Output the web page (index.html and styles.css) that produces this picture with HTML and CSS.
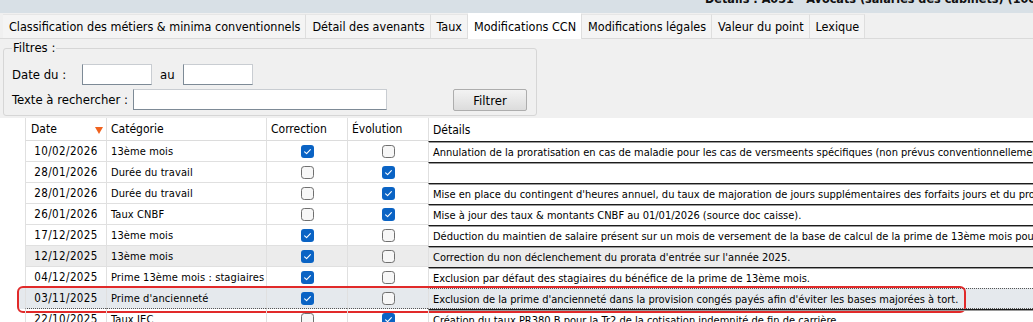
FILE: index.html
```html
<!DOCTYPE html>
<html lang="fr">
<head>
<meta charset="utf-8">
<title>Détails</title>
<link rel="stylesheet" href="styles.css">
</head>
<body>
<svg class="defs" width="0" height="0" aria-hidden="true">
  <symbol id="cb-on" viewBox="0 0 13 13">
    <rect x="0" y="0" width="13" height="13" rx="3" fill="#0a63c4"/>
    <path d="M3.6 6.9 L5.6 8.7 L9.4 4.6" fill="none" stroke="#fff" stroke-width="1.1" stroke-linecap="round" stroke-linejoin="round"/>
  </symbol>
  <symbol id="cb-off" viewBox="0 0 13 13">
    <rect x="0.5" y="0.5" width="12" height="12" rx="2.8" fill="#f7f7f7" stroke="#6f6f6f" stroke-width="1"/>
  </symbol>
</svg>

<div class="titlebar"><span class="title">Détails : A051 - Avocats (salariés des cabinets) (1000)</span></div>

<nav class="tabs">
  <span class="tab">Classification des métiers &amp; minima conventionnels</span>
  <span class="tab">Détail des avenants</span>
  <span class="tab">Taux</span>
  <span class="tab active">Modifications CCN</span>
  <span class="tab">Modifications légales</span>
  <span class="tab">Valeur du point</span>
  <span class="tab">Lexique</span>
</nav>

<fieldset class="filters">
  <legend>Filtres :</legend>
  <div class="frow">
    <label class="lbl-date">Date du :</label>
    <input class="inp date" type="text">
    <span class="au">au</span>
    <input class="inp date" type="text">
  </div>
  <div class="frow">
    <label class="lbl-text">Texte à rechercher :</label>
    <input class="inp text" type="text">
    <button class="btn" type="button">Filtrer</button>
  </div>
</fieldset>

<div class="grid">
  <div class="row head">
    <div class="c c0"></div>
    <div class="c c1">Date<span class="sort"></span></div>
    <div class="c c2">Catégorie</div>
    <div class="c c3">Correction</div>
    <div class="c c4">Évolution</div>
    <div class="c c5">Détails</div>
  </div>

  <div class="row">
    <div class="c c0"></div>
    <div class="c c1">10/02/2026</div>
    <div class="c c2">13ème mois</div>
    <div class="c c3"><svg class="cb"><use href="#cb-on"/></svg></div>
    <div class="c c4"><svg class="cb"><use href="#cb-off"/></svg></div>
    <div class="c c5">Annulation de la proratisation en cas de maladie pour les cas de versmeents spécifiques (non prévus conventionnellement)</div>
  </div>

  <div class="row">
    <div class="c c0"></div>
    <div class="c c1">28/01/2026</div>
    <div class="c c2">Durée du travail</div>
    <div class="c c3"><svg class="cb"><use href="#cb-off"/></svg></div>
    <div class="c c4"><svg class="cb"><use href="#cb-on"/></svg></div>
    <div class="c c5"></div>
  </div>

  <div class="row">
    <div class="c c0"></div>
    <div class="c c1">28/01/2026</div>
    <div class="c c2">Durée du travail</div>
    <div class="c c3"><svg class="cb"><use href="#cb-off"/></svg></div>
    <div class="c c4"><svg class="cb"><use href="#cb-on"/></svg></div>
    <div class="c c5">Mise en place du contingent d'heures annuel, du taux de majoration de jours supplémentaires des forfaits jours et du projet</div>
  </div>

  <div class="row">
    <div class="c c0"></div>
    <div class="c c1">26/01/2026</div>
    <div class="c c2">Taux CNBF</div>
    <div class="c c3"><svg class="cb"><use href="#cb-off"/></svg></div>
    <div class="c c4"><svg class="cb"><use href="#cb-on"/></svg></div>
    <div class="c c5">Mise à jour des taux &amp; montants CNBF au 01/01/2026 (source doc caisse).</div>
  </div>

  <div class="row">
    <div class="c c0"></div>
    <div class="c c1">17/12/2025</div>
    <div class="c c2">13ème mois</div>
    <div class="c c3"><svg class="cb"><use href="#cb-on"/></svg></div>
    <div class="c c4"><svg class="cb"><use href="#cb-off"/></svg></div>
    <div class="c c5">Déduction du maintien de salaire présent sur un mois de versement de la base de calcul de la prime de 13ème mois pour éviter</div>
  </div>

  <div class="row hover">
    <div class="c c0"></div>
    <div class="c c1">12/12/2025</div>
    <div class="c c2">13ème mois</div>
    <div class="c c3"><svg class="cb"><use href="#cb-on"/></svg></div>
    <div class="c c4"><svg class="cb"><use href="#cb-off"/></svg></div>
    <div class="c c5">Correction du non déclenchement du prorata d'entrée sur l'année 2025.</div>
  </div>

  <div class="row">
    <div class="c c0"></div>
    <div class="c c1">04/12/2025</div>
    <div class="c c2">Prime 13ème mois : stagiaires</div>
    <div class="c c3"><svg class="cb"><use href="#cb-on"/></svg></div>
    <div class="c c4"><svg class="cb"><use href="#cb-off"/></svg></div>
    <div class="c c5">Exclusion par défaut des stagiaires du bénéfice de la prime de 13ème mois.</div>
  </div>

  <div class="row selected">
    <div class="c c0"></div>
    <div class="c c1">03/11/2025</div>
    <div class="c c2">Prime d'ancienneté</div>
    <div class="c c3"><svg class="cb"><use href="#cb-on"/></svg></div>
    <div class="c c4"><svg class="cb"><use href="#cb-off"/></svg></div>
    <div class="c c5">Exclusion de la prime d'ancienneté dans la provision congés payés afin d'éviter les bases majorées à tort.</div>
    <div class="highlight"></div>
  </div>

  <div class="row">
    <div class="c c0"></div>
    <div class="c c1">22/10/2025</div>
    <div class="c c2">Taux IEC</div>
    <div class="c c3"><svg class="cb"><use href="#cb-off"/></svg></div>
    <div class="c c4"><svg class="cb"><use href="#cb-on"/></svg></div>
    <div class="c c5">Création du taux PR380 B pour la Tr2 de la cotisation indemnité de fin de carrière.</div>
  </div>
</div>
</body>
</html>
```

FILE: styles.css
```css
* { box-sizing: border-box; }

html, body {
  margin: 0;
  padding: 0;
}

body {
  width: 1033px;
  height: 322px;
  overflow: hidden;
  background: #f0f0f0;
  color: #000;
  font-family: "DejaVu Sans Condensed", "DejaVu Sans", sans-serif;
  font-stretch: condensed;
  font-size: 13px;
}

.defs { position: absolute; width: 0; height: 0; }

/* title bar */
.titlebar {
  height: 13px;
  background: #d8e0e6;
  overflow: hidden;
  display: flex;
  padding-left: 705px;
}
.title {
  font-weight: bold;
  font-size: 12.5px;
  line-height: 16px;
  margin-top: -9px;
  white-space: nowrap;
  color: #111;
}

/* tabs */
.tabs {
  display: flex;
  height: 26px;
  padding: 1px 0 0 3px;
  border-bottom: 1px solid #dadada;
  background: #f0f0f0;
  font-size: 12.5px;
}
.tab {
  height: 24px;
  line-height: 24px;
  padding: 0 5px 0 6px;
  background: #f4f4f4;
  border-right: 1px solid #dedede;
  border-top: 1px solid #e6e6e6;
  white-space: nowrap;
}
.tab.active {
  background: #fff;
  border-top-color: #fff;
  margin-top: -1px;
  height: 26px;
  line-height: 25px;
}

/* filter fieldset */
.filters {
  margin: 2px 0 0 3px;
  width: 534px;
  padding: 0 9px 5px 8px;
  border: 1px solid #d6d6d6;
  border-radius: 3px;
}
.filters legend {
  padding: 0 1px;
  line-height: 14px;
  font-size: 13px;
}
.frow {
  display: flex;
  align-items: center;
  height: 21px;
}
.frow + .frow {
  margin-top: 4px;
}
.frow:first-of-type {
  margin-top: 9px;
}
.lbl-date { width: 70px; }
.lbl-text { width: 121px; }
.au { width: 31px; padding-left: 8px; }

.inp {
  height: 21px;
  background: #fff;
  border: 1px solid #c9cdd2;
  border-left-color: #7d8a96;
  border-bottom-color: #7d8a96;
  padding: 0;
  margin: 0;
  font: inherit;
}
.inp.date { width: 70px; }
.inp.text { width: 254px; }

.btn {
  margin-left: auto;
  width: 74px;
  height: 22px;
  margin-top: 1px;
  font: inherit;
  color: #000;
  background: linear-gradient(#f3f3f3, #dcdcdc);
  border: 1px solid #adadad;
  border-radius: 2px;
  padding: 0;
}

/* grid */
.grid {
  margin-top: 2px;
  background: #fff;
  font-size: 12px;
}
.row {
  display: grid;
  grid-template-columns: 25px 81px 160px 81px 81px 605px;
  height: 21px;
  position: relative;
}
.row.head {
  height: 23px;
}
.c {
  border-left: 1px solid #e0e0e0;
  border-bottom: 1px solid #e0e0e0;
  white-space: nowrap;
  overflow: hidden;
  display: flex;
  align-items: center;
  padding: 0 4px;
}
.c0 {
  border-left: none;
  border-bottom: none;
  padding: 0;
}
.row .c1 {
  justify-content: center;
  padding: 0;
  font-size: 11.5px;
  letter-spacing: 0.4px;
}
.row .c2 { font-size: 11px; letter-spacing: 0.1px; }
.row.head .c1, .row.head .c2 { font-size: 12px; letter-spacing: 0; }
.row.head .c1 { justify-content: flex-start; padding-left: 5px; position: relative; }
.c3, .c4 { justify-content: center; }
.row.head .c3, .row.head .c4 { justify-content: flex-start; }
.row.head .c { border-bottom-color: #dcdcdc; }

.c5 {
  font-size: 11px;
  border-top: 1px solid #1c1c1c;
  box-shadow: inset 0 1px 0 #9a9a9a;
  border-bottom: none;
  padding-top: 1px;
}
.row.head .c5 {
  font-size: 12px;
  border-top: none;
  box-shadow: none;
  border-bottom: none;
  padding-top: 0;
}

.sort {
  position: absolute;
  right: 3px;
  top: 9px;
  width: 0;
  height: 0;
  border-left: 4px solid transparent;
  border-right: 4px solid transparent;
  border-top: 7px solid #f0621e;
}

.cb {
  width: 13px;
  height: 13px;
  display: block;
}

.row.hover .c:not(.c0) { background: #ececec; }

.row.selected .c:not(.c0) {
  background: #e5e9ed;
  border-bottom: 1px dotted #555;
}
.row.selected .c5 {
  border-top: 1px dotted #555;
  box-shadow: none;
}
.row.selected .c0 {
  background: linear-gradient(to right, transparent 19px, #e5e9ed 19px);
}

.highlight {
  position: absolute;
  left: 17px;
  top: -2px;
  width: 949px;
  height: 27px;
  border: 2px solid #e12a2a;
  border-radius: 6px;
  pointer-events: none;
}
```
